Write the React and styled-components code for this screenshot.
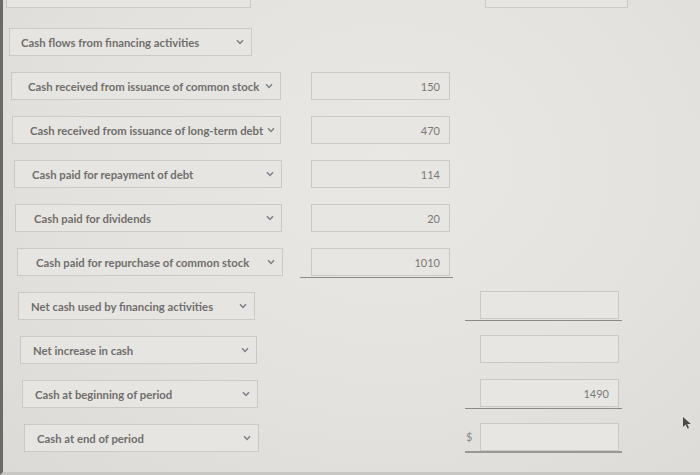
import React from 'react'
import styled, { createGlobalStyle } from 'styled-components'

const GlobalStyle = createGlobalStyle`
  html, body { margin: 0; padding: 0; }
  body {
    width: 700px;
    height: 475px;
    overflow: hidden;
    background: #e4e2df;
    font-family: Lato, "Open Sans", sans-serif;
  }
`

const Page = styled.div`
  box-sizing: border-box;
  width: 700px;
  height: 475px;
  border-left: 3px solid #6a6a69;
  border-bottom: 3px solid #c9c7c4;
  background: radial-gradient(ellipse at 55% 35%, #eae8e5 0%, #e4e2df 55%, #dcdad7 100%);
  position: relative;
  overflow: hidden;
`

const TopStrip = styled.div`
  height: 8px;
  overflow: hidden;
  display: flex;
  align-items: flex-end;
  margin-bottom: 20px;
`

const StubBox = styled.div`
  box-sizing: border-box;
  flex: none;
  height: 28px;
  margin-left: ${({ $left }) => $left}px;
  width: ${({ $w }) => $w}px;
  border: 1px solid #cbc9c6;
  background: #e7e5e2;
`

const Row = styled.div`
  display: grid;
  grid-template-columns: 297px 165px 160px;
  height: 44px;
`

const LabelCell = styled.div`
  padding-left: ${({ $indent }) => $indent}px;
`

const Select = styled.div`
  box-sizing: border-box;
  width: ${({ $w }) => $w}px;
  height: 28px;
  border: 1px solid #cbc9c6;
  background: #e7e5e2;
  display: flex;
  align-items: center;
  justify-content: space-between;
  gap: 4px;
  padding: 0 7px 0 ${({ $pad }) => $pad}px;
  font-size: 11.3px;
  font-weight: 700;
  color: #706e6c;
  white-space: nowrap;
  svg { flex: none; }
`

const Chevron = () => (
  <svg width="8" height="6" viewBox="0 0 8 6">
    <path d="M1 1.2 L4 4.4 L7 1.2" fill="none" stroke="#7c8088" strokeWidth="1.5" />
  </svg>
)

const AmountCell = styled.div`
  box-sizing: border-box;
  width: ${({ $w }) => $w}px;
  height: ${({ $line }) => ($line ? 30 : 28)}px;
  padding-left: ${({ $pad }) => $pad}px;
  display: flex;
  align-items: flex-start;
  border-bottom: ${({ $line }) => $line || 'none'};
  margin-top: ${({ $up }) => ($up ? -1 : 0)}px;
`

const Input = styled.div`
  box-sizing: border-box;
  width: 139px;
  height: 28px;
  border: 1px solid #cbc9c6;
  background: #e8e6e3;
  display: flex;
  align-items: center;
  justify-content: flex-end;
  padding-right: 9px;
  font-size: 11px;
  color: #7a7876;
`

const Dollar = styled.span`
  width: 14px;
  font-size: 11px;
  color: #8a8886;
  padding-top: 7px;
`

const Cursor = () => (
  <svg width="10" height="14" viewBox="0 0 10 14" style={{ position: 'absolute', left: 679, top: 416 }}>
    <path d="M1 1 L1 11 L3.6 8.6 L5.5 12.6 L7 12 L5.2 8 L8.8 8 Z" fill="#4a4a4a" />
  </svg>
)

const rows = [
  { label: 'Cash flows from financing activities', indent: 9, w: 243, pad: 11 },
  { label: 'Cash received from issuance of common stock', indent: 11, w: 270, pad: 16, mid: '150' },
  { label: 'Cash received from issuance of long-term debt', indent: 12, w: 269, pad: 17, mid: '470' },
  { label: 'Cash paid for repayment of debt', indent: 14, w: 268, pad: 17, mid: '114' },
  { label: 'Cash paid for dividends', indent: 15, w: 267, pad: 18, mid: '20' },
  { label: 'Cash paid for repurchase of common stock', indent: 17, w: 266, pad: 18, mid: '1010', midLine: true },
  { label: 'Net cash used by financing activities', indent: 18, w: 237, pad: 12, right: '', rightLine: '1px solid #8c8a88' },
  { label: 'Net increase in cash', indent: 20, w: 237, pad: 12, right: '' },
  { label: 'Cash at beginning of period', indent: 22, w: 236, pad: 12, right: '1490', rightLine: '1px solid #8c8a88' },
  { label: 'Cash at end of period', indent: 24, w: 235, pad: 12, right: '', dollar: true, rightLine: '2px solid #9a9896' },
]

export default function App() {
  return (
    <>
      <GlobalStyle />
      <Page>
        <TopStrip>
          <StubBox $left={3} $w={245} />
          <StubBox $left={234} $w={143} />
        </TopStrip>
        {rows.map((r) => (
          <Row key={r.label}>
            <LabelCell $indent={r.indent - 3}>
              <Select $w={r.w} $pad={r.pad}>
                <span>{r.label}</span>
                <Chevron />
              </Select>
            </LabelCell>
            <div>
              {r.mid !== undefined && (
                <AmountCell $w={153} $pad={11} $line={r.midLine ? '1px solid #8c8a88' : ''}>
                  <Input>{r.mid}</Input>
                </AmountCell>
              )}
            </div>
            <div>
              {r.right !== undefined && (
                <AmountCell $w={157} $pad={r.dollar ? 1 : 15} $line={r.rightLine} $up>
                  {r.dollar && <Dollar>$</Dollar>}
                  <Input>{r.right}</Input>
                </AmountCell>
              )}
            </div>
          </Row>
        ))}
        <Cursor />
      </Page>
    </>
  )
}
